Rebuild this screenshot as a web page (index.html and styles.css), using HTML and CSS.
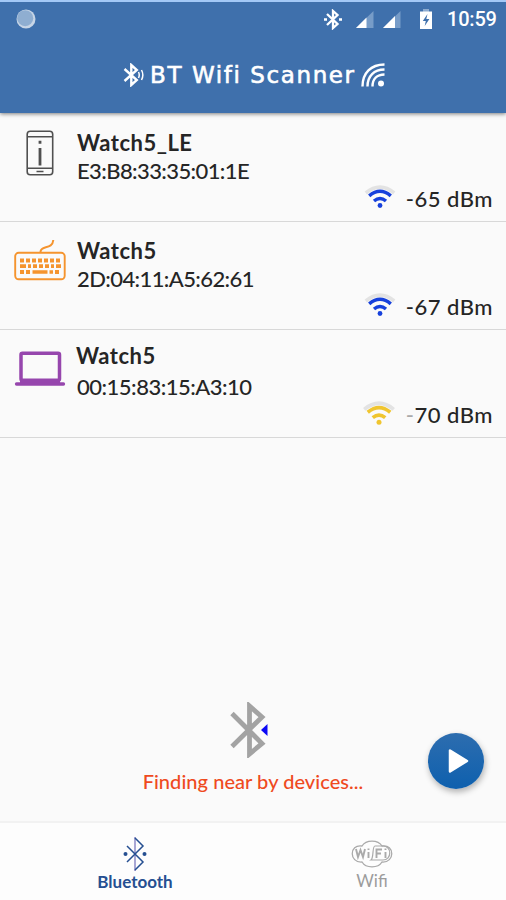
FILE: index.html
```html
<!DOCTYPE html>
<html lang="en">
<head>
<meta charset="utf-8">
<title>BT Wifi Scanner</title>
<link rel="stylesheet" href="styles.css">
</head>
<body>
<svg class="defs" aria-hidden="true">
  <symbol id="signal" viewBox="0 0 32 24">
    <path class="outer" d="M1.800 8Q16 -3.600 30.200 8" fill="none" stroke="#e3e3e3" stroke-width="3.600"/>
    <path d="M5.200 10.800Q16 1.800 26.800 10.800M10 16Q16 11 22 16" fill="none" stroke="currentColor" stroke-width="3.500"/>
    <circle cx="16" cy="20.500" r="2.400" fill="currentColor"/>
  </symbol>
</svg>
<div class="app">
  <header class="header">
    <div class="status">
      <svg class="spinner" width="20" height="20" viewBox="0 0 20 20"><circle cx="10" cy="10" r="9.500" fill="#c7d5e6"/><circle cx="9.200" cy="9.200" r="8" fill="#8faed1"/></svg>
      <svg class="st-bt" width="18" height="21" viewBox="0 0 18 21" fill="none" stroke="#fff" stroke-width="2.300"><path d="M3 5 13.500 15 9 19V2l4.500 4L3 16"/><path d="M0 10.500h3M15 10.500h3" stroke-width="2.500"/></svg>
      <svg class="st-sig" width="18" height="17" viewBox="0 0 18 17"><path d="M0 17 17.500 0v17z" fill="#779cc8"/><path d="M0 17 10.500 6.500V17z" fill="#fff"/></svg>
      <svg class="st-sig2" width="18" height="17" viewBox="0 0 18 17"><path d="M0 17 17.500 0v17z" fill="#779cc8"/><path d="M0 17 12 5v12z" fill="#fff"/></svg>
      <svg class="st-bat" width="14" height="21" viewBox="0 0 14 21"><path d="M4 0h6v3H4z" fill="#8dabd0"/><path d="M1 2.500h12V20H1z" fill="#fff"/><path d="M8.500 5 3.800 12h3L5.700 17l4.700-7H7.300z" fill="#3f70ac"/></svg>
      <span class="clock">10:59</span>
    </div>
    <div class="brand">
      <svg width="22" height="24" viewBox="0 0 22 24" fill="none" stroke="#fff" stroke-width="2.400"><path d="m1.500 6 12.300 11L8.300 22V2l5.500 5L1.500 18"/><path d="M15.500 9q1.500 3 0 6M18.500 7q2.700 5 0 10" stroke-width="1.500"/></svg>
      <h1>BT Wifi Scanner</h1>
      <svg width="24" height="24" viewBox="0 0 24 24" fill="none" stroke="#fff" stroke-width="2.400"><path d="M1.500 23.500C1.500 10 10 1.500 23.500 1.500M6.500 23.500C6.500 13 13 6.500 23.500 6.500M11.500 23.500C11.500 16 16 11.500 23.500 11.500"/><circle cx="20" cy="20.500" r="3" fill="#fff" stroke="none"/></svg>
    </div>
  </header>
  <main class="list">
    <section class="row">
      <svg class="device" width="52" height="50" viewBox="0 0 52 50" fill="none" stroke="#505050"><rect x="13.200" y="3.200" width="25.500" height="43.500" rx="3" stroke-width="1.600"/><path d="M13 8.700h26M13 40.200h26M22.500 43.500h7" stroke-width="1.500"/><path d="M26 20V37.500M26 12.700v3" stroke-width="2.800"/></svg>
      <div class="info"><h2>Watch5_LE</h2><p>E3:B8:33:35:01:1E</p></div>
      <div class="level blue"><svg width="32" height="24"><use href="#signal"/></svg><span>-65 dBm</span></div>
    </section>
    <section class="row second">
      <svg class="device" width="52" height="50" viewBox="0 0 52 50" fill="none" stroke="#f5942e"><path d="M26.500 17c0-7 12-2 12.800-12" stroke-width="2"/><rect x="1.200" y="17.800" width="49.500" height="26.500" rx="3.500" stroke-width="1.900"/><path d="M6 25.500h40M6 37h10m25 0h5" stroke-width="3.800" stroke-dasharray="4 2"/><path d="M6 31.200h6m2 0h3m2 0h4m2 0h4m2 0h4m2 0h3m2 0h5M18.500 37h15m2 0h3.500" stroke-width="3.700"/></svg>
      <div class="info"><h2>Watch5</h2><p>2D:04:11:A5:62:61</p></div>
      <div class="level blue"><svg width="32" height="24"><use href="#signal"/></svg><span>-67 dBm</span></div>
    </section>
    <section class="row third">
      <svg class="device" width="52" height="50" viewBox="0 0 52 50" fill="none" stroke="#9646ad"><rect x="7" y="10.300" width="38.500" height="27" rx="1.500" stroke-width="3.500"/><path d="M6 38h40v3H6z" fill="#9646ad" stroke="none"/><path d="M2.500 41h47" stroke-width="3.300" stroke-linecap="round"/></svg>
      <div class="info"><h2>Watch5</h2><p>00:15:83:15:A3:10</p></div>
      <div class="level yellow"><svg width="34" height="25"><use href="#signal"/></svg><span><i>-</i>70 dBm</span></div>
    </section>
  </main>
  <section class="scan">
    <div class="finding">
      <svg width="40" height="56" viewBox="0 0 40 56" fill="none"><path d="M3 11.500 33 41.500 20.500 52V4L33 15 3 44.500" stroke="#a3a3a3" stroke-width="4.800"/><path d="M38.500 22v12L32 28z" fill="#0b08f5"/></svg>
      <p>Finding near by devices...</p>
    </div>
    <button class="play" aria-label="Start scan"><svg width="22" height="26" viewBox="0 0 22 26"><path d="M3 2.500v21L20 13z" fill="#fff" stroke="#fff" stroke-width="2.500" stroke-linejoin="round"/></svg></button>
  </section>
  <nav class="nav">
    <a class="tab active"><svg width="26" height="36" viewBox="0 0 26 36" fill="none" stroke="#254f91" stroke-width="1.500"><path d="M13 1v34" stroke="#a9a7d4" stroke-width="2"/><path d="m5 10 16 16-8 8M13 2l8 8L5 26"/><circle cx="3.500" cy="18" r="2" fill="#254f91" stroke="none"/><circle cx="22.500" cy="18" r="2" fill="#254f91" stroke="none"/></svg><span>Bluetooth</span></a>
    <a class="tab"><svg width="42" height="30" viewBox="0 0 42 30" fill="none" stroke="#aaa"><path d="M11 7C15 .5 27 .5 31 7c13-2 13 17 0 16C27 29.500 15 29.500 11 23-2 24-2 5 11 7z" stroke-width="1.300"/><path d="M24 7h8c9 0 9 14 0 14H20c3-2 1-14 4-14z" stroke-width="1.200"/><path d="m5 10 2 8 2.500-7 2.500 7 2-8M17.500 13v6M17.500 9.500v1.500M25.500 19v-8.500H31M25.500 14.500H30M34.500 13v6M34.500 9.500v1.500" stroke-width="1.900"/></svg><span>Wifi</span></a>
  </nav>
</div>
</body>
</html>
```
FILE: styles.css
```css
* { box-sizing: border-box; }
body { margin: 0; background: #fafafa; font-family: Lato, "Open Sans", sans-serif; color: #252525; }
h1, h2, p { margin: 0; font-weight: 500; }
svg { display: block; flex: none; }
.defs { position: absolute; width: 0; height: 0; }
.app { width: 506px; height: 900px; display: flex; flex-direction: column; overflow: hidden; }
.header { height: 113px; flex: none; background: #3f70ac; border-top: 2px solid #a3c8f6; color: #fff; box-shadow: 0 1px 4px rgba(0,0,0,.5); z-index: 1; }
.status { height: 34px; display: flex; align-items: center; padding: 0 10px 0 16px; }
.st-bt { margin-left: auto; }
.st-sig { margin-left: 14px; }
.st-sig2 { margin-left: 9px; }
.st-bat { margin-left: 18px; }
.clock { margin-left: 14px; font: 500 20px/35px Roboto, sans-serif; width: 49px; white-space: nowrap; letter-spacing: -.2px; }
.brand { display: flex; align-items: center; height: 78px; padding: 0 0 0 123px; }
.brand h1 { width: 211px; margin: 0 1px 0 4px; padding-left: 1px; font: 500 23px/30px "DejaVu Sans", sans-serif; -webkit-text-stroke: .6px #fff; white-space: nowrap; letter-spacing: 1.600px; }
.list { flex: none; padding-top: 1px; }
.row { height: 108px; display: grid; grid-template-columns: 52px 1fr auto; column-gap: 11px; padding: 0 13px 0 14px; border-bottom: 1px solid #d8d8d8; }
.device { margin-top: 14px; }
.second .device { margin-top: 13px; }
.third .device { margin-top: 13px; }
.info { padding-top: 15px; white-space: nowrap; }
h2 { font-size: 22px; line-height: 28px; font-weight: 700; letter-spacing: .5px; }
.info p { font-size: 22px; line-height: 28px; letter-spacing: -.6px; }
.third .info { padding-top: 12px; margin-left: -1px; }
.third .info p { margin: 3px 0 0 1px; letter-spacing: -.5px; }
.level { align-self: end; display: flex; align-items: center; height: 28px; gap: 9px; margin-bottom: 9px; font-size: 22px; white-space: nowrap; font-weight: 500; }
.level svg { margin: -2px 1px 0 0; }
.level i { font-style: normal; color: #aaa; }
.blue { color: #1741dc; }
.yellow { color: #f0c52f; }
.level span { color: #252525; letter-spacing: .5px; }
.scan { flex: 1; position: relative; }
.finding { padding-top: 264px; display: flex; flex-direction: column; align-items: center; color: #ef4a1e; }
.finding svg { margin-right: 8px; }
.finding p { font-size: 20px; line-height: 28px; margin-top: 9px; white-space: nowrap; letter-spacing: .05px; }
.play { position: absolute; right: 22px; bottom: 32px; width: 56px; height: 56px; border: 0; border-radius: 50%; padding: 0 0 0 3px; display: flex; align-items: center; justify-content: center; background: linear-gradient(#2d6daf, #0e60ae); box-shadow: 1px 3px 6px rgba(0,0,0,.3); }
.nav { height: 79px; flex: none; border-top: 2px solid #f2f2f2; background: #fdfdfd; display: grid; grid-template-columns: 270px 204px; }
.tab { display: flex; flex-direction: column; align-items: center; font-size: 17px; line-height: 22px; color: #9c9c9c; padding-top: 16px; }
.tab span { margin-top: 1px; }
.tab.active { padding-top: 13px; color: #254f91; font-weight: 700; }
.tab.active span { margin-top: -1px; }
```
